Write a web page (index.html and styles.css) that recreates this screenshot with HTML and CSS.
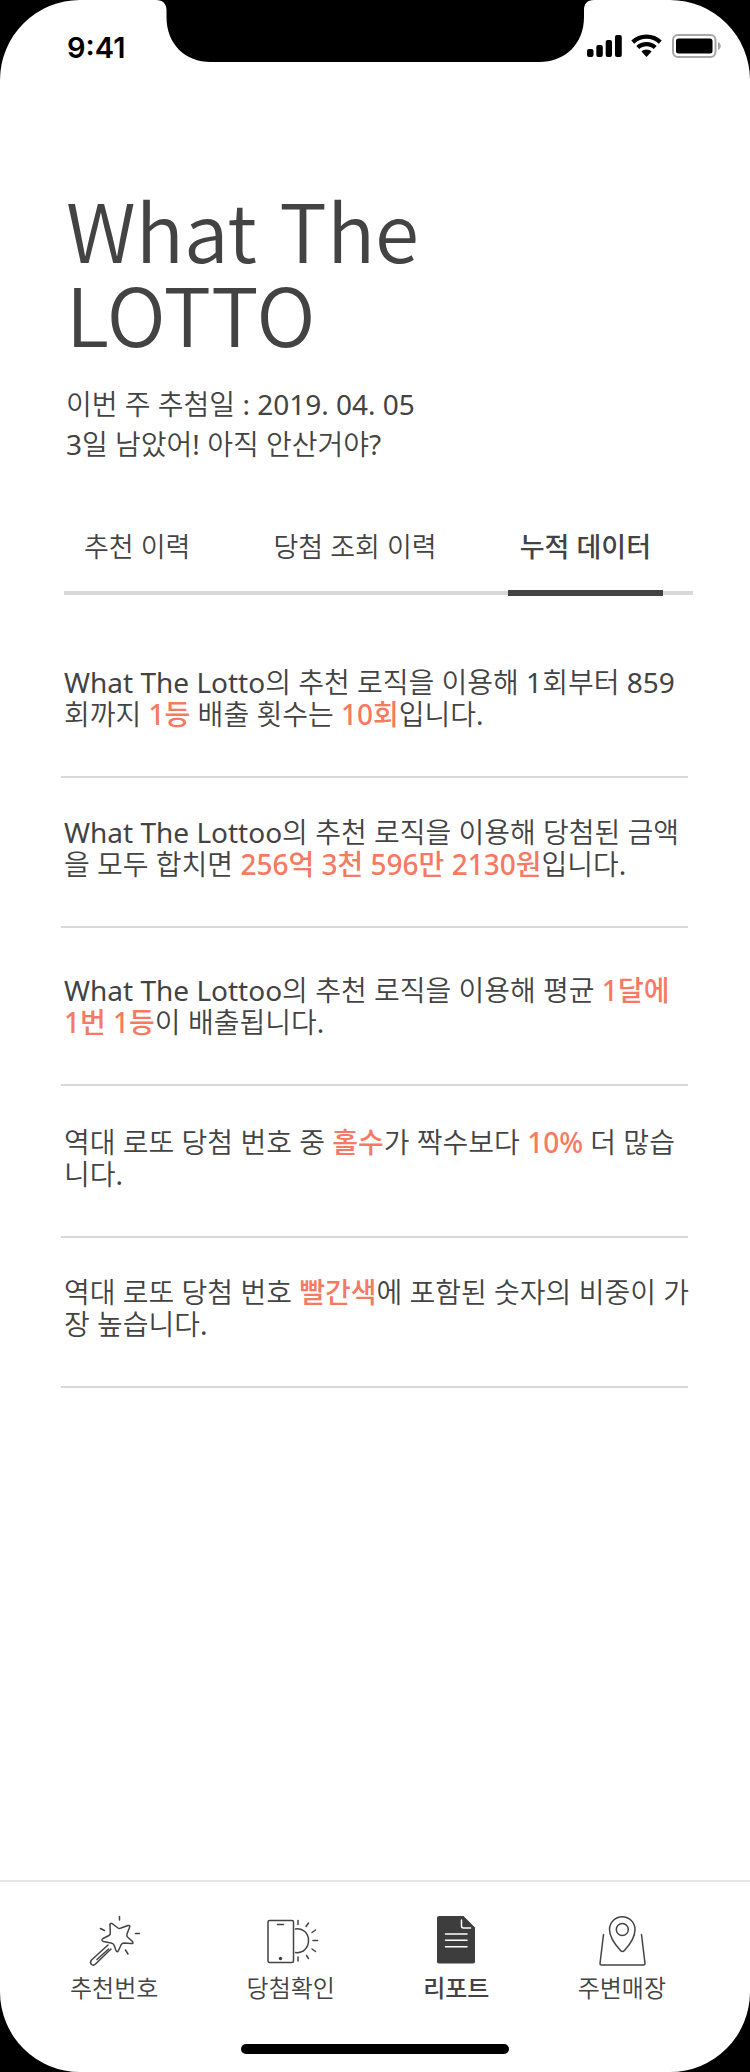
FILE: index.html
```html
<!DOCTYPE html>
<html lang="ko">
<head>
<meta charset="utf-8">
<meta name="viewport" content="width=device-width, initial-scale=1">
<title>What The LOTTO</title>
<link rel="stylesheet" href="styles.css">
</head>
<body>
<div class="screen">
  <svg class="notch" viewBox="0 0 438 62" aria-hidden="true">
    <path d="M0 0C7 0 10.500 4 10.500 10V17C10.500 44 29 62 55 62H383C409 62 428 44 428 17V10C428 4 431 0 438 0Z"/>
  </svg>
  <div class="status">
    <span class="status-time">9:41</span>
    <svg class="status-icons" viewBox="0 0 136 26" aria-hidden="true">
      <rect x="0" y="15" width="6.500" height="8" rx="2"/>
      <rect x="9.300" y="11" width="6.500" height="12" rx="2"/>
      <rect x="18.700" y="6" width="6.300" height="17" rx="2"/>
      <rect x="28" y="1" width="6.800" height="22" rx="2"/>
      <path d="M59.500 0.500C65.500 0.500 70.700 2.600 74.700 6.600L71.800 9.800C68.400 6.500 64.200 4.800 59.500 4.800S50.600 6.500 47.200 9.800L44.300 6.600C48.300 2.600 53.500 0.500 59.500 0.500Z"/>
      <path d="M59.500 8C63.500 8 67 9.400 69.700 12L66.700 15C64.700 13.200 62.300 12.300 59.500 12.300S54.300 13.200 52.300 15L49.300 12C52 9.400 55.500 8 59.500 8Z"/>
      <path d="M59.500 15.500C61.500 15.500 63.300 16.200 64.600 17.500L59.500 23L54.400 17.500C55.700 16.200 57.500 15.500 59.500 15.500Z"/>
      <rect class="battery-shell" x="86" y="1" width="42.500" height="22" rx="5"/>
      <rect x="89" y="4.500" width="36.500" height="15" rx="2.500"/>
      <path class="battery-tip" d="M131 8C134.700 9.500 134.700 14.500 131 16Z"/>
    </svg>
  </div>

  <header class="intro">
    <h1 class="title">What The<br>LOTTO</h1>
    <p class="subtitle">이번 주 추첨일 : 2019. 04. 05<br>3일 남았어! 아직 안산거야?</p>
  </header>

  <nav class="tabs" aria-label="리포트">
    <a class="tab" href="#history">추천 이력</a>
    <a class="tab" href="#results">당첨 조회 이력</a>
    <a class="tab tab-active" href="#data" aria-current="page">누적 데이터</a>
  </nav>

  <main class="facts">
    <p class="fact">What The Lotto의 추천 로직을 이용해 1회부터 859<br>회까지 <strong>1등</strong> 배출 횟수는 <strong>10회</strong>입니다.</p>
    <p class="fact">What The Lottoo의 추천 로직을 이용해 당첨된 금액<br>을 모두 합치면 <strong>256억 3천 596만 2130원</strong>입니다.</p>
    <p class="fact fact-average">What The Lottoo의 추천 로직을 이용해 평균 <strong>1달에<br>1번 1등</strong>이 배출됩니다.</p>
    <p class="fact fact-odd">역대 로또 당첨 번호 중 <strong>홀수</strong>가 짝수보다 <strong>10%</strong> 더 많습<br>니다.</p>
    <p class="fact">역대 로또 당첨 번호 <strong>빨간색</strong>에 포함된 숫자의 비중이 가<br>장 높습니다.</p>
  </main>

  <nav class="dock" aria-label="메뉴">
    <a class="dock-item" href="#pick">
      <svg class="dock-icon" viewBox="0 0 52 52" aria-hidden="true">
        <path d="M22 8.500Q22.300 7 24 7.500L30 12Q31.500 13 33 12L40 9.500Q42.500 9 41.500 11.500L39 18Q38.500 20 39.500 21L44.500 25.500Q46 28 43 27.500L36 27Q34 27 33 29L30.500 34.500Q29 37 28 34.500L26 29Q25.500 27.500 23 27L15.500 25.500Q12.500 24.500 15 22.500L21 19.500Q22.500 18.500 22.300 16.500Z"/>
        <path d="M20 29L3.500 44Q1.500 46.500 3.500 48.500Q5.500 50 7.500 48L23 33"/>
        <path d="M20.500 33L9 43.500M31.500 0.500V4M12.500 12.500L16.500 14.500M47.500 17.500H51.500M37.500 34L40 38"/>
      </svg>
      <span>추천번호</span>
    </a>
    <a class="dock-item" href="#check">
      <svg class="dock-icon" viewBox="0 0 52 52" aria-hidden="true">
        <rect x="3" y="4.500" width="25.500" height="42" rx="1.500"/>
        <path d="M12.500 8.500H18.500"/>
        <circle class="solid" cx="15.500" cy="42.500" r="1.700"/>
        <path d="M30.500 13C38 12 43.500 17 43.500 24.500S38 37.500 30.500 36.500M33 4.500V8.500M43.500 7L41 10.500M50.500 14L47 16.500M48 24.500H52.500M47 33L50.500 35.500M41.500 39.500L43.500 42.500M33 41V45"/>
      </svg>
      <span>당첨확인</span>
    </a>
    <a class="dock-item dock-active" href="#report" aria-current="page">
      <svg class="dock-icon" viewBox="0 0 52 52" aria-hidden="true">
        <path class="solid" d="M9 0H33.500L45 11.500V45.500Q45 47.500 43 47.500H9Q7 47.500 7 45.500V2Q7 0 9 0Z"/>
        <path class="knockout" d="M31.500 4V10Q31.500 12 33.500 12H40.500M15.500 18H37M15.500 24.300H37M15.500 30.700H37"/>
      </svg>
      <span>리포트</span>
    </a>
    <a class="dock-item" href="#stores">
      <svg class="dock-icon" viewBox="0 0 52 52" aria-hidden="true">
        <path d="M26.500 35.500Q25.500 35.500 24.500 34.500C19 28.500 13.500 20.500 13.500 13.500A12.700 12.700 0 0 1 39 13.500C39 20.500 34 28.500 28.500 34.500Q27.500 35.500 26.500 35.500Z"/>
        <circle cx="26.300" cy="13.500" r="6"/>
        <path d="M7.500 18.500L4 47.500Q4 49 5.500 49H47.500Q49 49 49 47.500L45.500 18.500"/>
      </svg>
      <span>주변매장</span>
    </a>
  </nav>
  <div class="home-bar"></div>
</div>
</body>
</html>
```
FILE: styles.css
```css
* {
  box-sizing: border-box;
}

body {
  margin: 0;
  background: #000;
  color: #434343;
  font-family: "Noto Sans", "Noto Sans CJK KR DemiLight", "Noto Sans CJK KR", sans-serif;
  font-size: 28px;
  font-weight: 400;
}

a {
  color: inherit;
  text-decoration: none;
}

.screen {
  position: relative;
  display: flex;
  flex-direction: column;
  min-height: 100vh;
  border-radius: 80px;
  background: #fff;
}

.notch {
  position: absolute;
  top: 0;
  left: 50%;
  width: 438px;
  height: 62px;
  transform: translateX(-50%);
}

.status {
  display: flex;
  align-items: center;
  justify-content: space-between;
  height: 94px;
  padding: 0 27px 0 67px;
  color: #000;
}

.status-time {
  font-family: Inter, sans-serif;
  font-size: 29px;
  font-weight: 600;
}

.status-icons {
  width: 136px;
  height: 26px;
}

.battery-shell {
  fill: none;
  stroke: #a6a6a6;
  stroke-width: 2;
}

.battery-tip {
  fill: #a6a6a6;
}

.intro {
  padding: 92px 66px 0;
}

.title {
  margin: 0;
  font-family: "Noto Sans CJK KR", sans-serif;
  font-size: 80px;
  font-weight: 350;
  line-height: 84px;
}

.subtitle {
  margin: 30px 0 0;
  line-height: 40px;
}

.tabs {
  display: flex;
  justify-content: space-between;
  margin: 60px 57px 0 64px;
  padding: 0 30px 0 8px;
  background: linear-gradient(#d8d8d8, #d8d8d8) 0 calc(100% - 1px) / 100% 4px no-repeat;
  font-size: 27px;
}

.tab {
  padding: 3px 12px 23px;
  border-bottom: 6px solid transparent;
  line-height: 40px;
}

.tab-active {
  border-color: #434343;
}

.facts {
  margin: 32px 62px 0 61px;
}

.fact {
  margin: 0;
  padding: 38px 0 46px 3px;
  border-bottom: 2px solid #d8d8d8;
  line-height: 32px;
  white-space: nowrap;
}

.fact-average {
  padding-top: 46px;
}

.fact-odd {
  padding-top: 40px;
}

.fact strong {
  color: #f67961;
}

.tab-active,
.dock-active,
.fact strong {
  font-family: "Noto Sans", "Noto Sans CJK KR", sans-serif;
  font-weight: 500;
}

.dock {
  display: flex;
  justify-content: space-between;
  margin-top: auto;
  padding: 34px 84px 0 70px;
  border-top: 2px solid #e6e6e6;
  font-size: 24px;
  line-height: 36px;
}

.dock-item {
  display: flex;
  flex-direction: column;
  align-items: center;
  gap: 2px;
}

.dock-icon {
  width: 52px;
  height: 52px;
  overflow: visible;
  fill: none;
  stroke: #434343;
  stroke-width: 1.5;
  stroke-linecap: round;
  stroke-linejoin: round;
}

.solid {
  fill: #3d3d3d;
  stroke: none;
}

.knockout {
  stroke: #fff;
}

.home-bar {
  align-self: center;
  width: 268px;
  height: 10px;
  margin: 38px 0 18px;
  border-radius: 5px;
  background: #000;
}
```
